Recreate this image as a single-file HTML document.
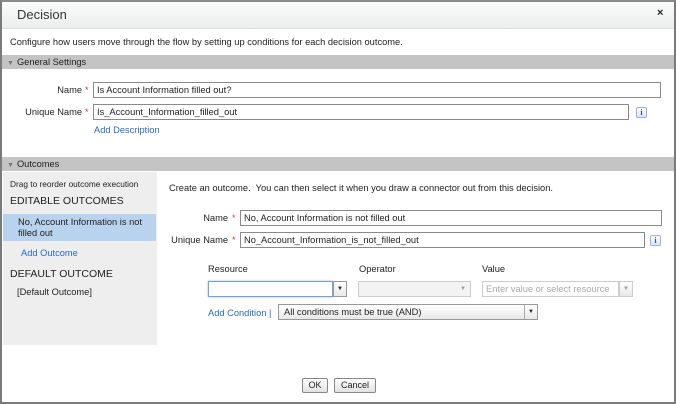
<!DOCTYPE html>
<html><head><style>
*{box-sizing:border-box;margin:0;padding:0}
body{width:676px;height:404px;overflow:hidden;background:#fff;font-family:"Liberation Sans",Arial,sans-serif;font-size:9.3px;color:#222;position:relative}
.a{position:absolute}
.frame{left:0;top:0;width:676px;height:404px;border:2px solid #7a7a7a;border-top-color:#8a8a8a}
.hdr{left:2px;top:2px;width:672px;height:27px;background:linear-gradient(#fafbfb,#eceeee);border-bottom:1px solid #ddd}
.bar{left:2px;width:672px;height:14px;background:#c4c4c4;font-size:9.3px;line-height:14px;padding-left:5px;color:#222}
.bar span{color:#777;font-size:7px;margin-right:3px}
.inp{border:1px solid #8a8a8a;background:#fff;height:16px;line-height:14px;padding-left:3px;font-size:9.3px}
.lbl{text-align:right;font-size:9.3px}
.star{color:#d33;font-size:9px}
.link{color:#2a6bb8}
.info{width:11px;height:11px;border:1px solid #aac;background:linear-gradient(#fff,#dde6f2);border-radius:2px;color:#1f5fb0;font-weight:bold;font-size:8px;text-align:center;line-height:9px;font-family:"Liberation Serif",serif}
.dd{border:1px solid #999;background:linear-gradient(#fff,#e8e8e8);height:16px}
.arr{font-size:6px;text-align:center;line-height:14px}
.btn{border:1px solid #888;border-radius:2px;background:linear-gradient(#fff,#e2e2e2);height:15px;line-height:13px;text-align:center;font-size:9px}
</style></head><body>
<div class="a frame"></div>
<div class="a hdr"></div>
<div class="a" style="left:17px;top:7px;font-size:13px;color:#333">Decision</div>
<div class="a" style="left:657px;top:7px;font-size:11px;font-weight:bold">×</div>
<div class="a" style="left:10px;top:37px">Configure how users move through the flow by setting up conditions for each decision outcome.</div>
<div class="a bar" style="top:55px"><span>▼</span>General Settings</div>
<div class="a lbl" style="left:10px;top:85px;width:72px">Name</div>
<div class="a star" style="left:85px;top:85px">*</div>
<div class="a inp" style="left:93px;top:82px;width:568px">Is Account Information filled out?</div>
<div class="a lbl" style="left:10px;top:107px;width:72px">Unique Name</div>
<div class="a star" style="left:85px;top:107px">*</div>
<div class="a inp" style="left:93px;top:104px;width:536px">Is_Account_Information_filled_out</div>
<div class="a info" style="left:636px;top:107px">i</div>
<div class="a link" style="left:94px;top:125px">Add Description</div>
<div class="a bar" style="top:157px"><span>▼</span>Outcomes</div>
<div class="a" style="left:3px;top:172px;width:154px;height:173px;background:#eeeeef"></div>
<div class="a" style="left:10px;top:179px;font-size:8.3px">Drag to reorder outcome execution</div>
<div class="a" style="left:10px;top:195px;font-size:10.5px">EDITABLE OUTCOMES</div>
<div class="a" style="left:3px;top:214px;width:153px;height:27px;background:#b9d2ee"></div>
<div class="a" style="left:18px;top:217px;line-height:11px">No, Account Information is not<br>filled out</div>
<div class="a link" style="left:21px;top:248px">Add Outcome</div>
<div class="a" style="left:10px;top:268px;font-size:10.5px">DEFAULT OUTCOME</div>
<div class="a" style="left:17px;top:287px">[Default Outcome]</div>
<div class="a" style="left:169px;top:183px">Create an outcome.&nbsp; You can then select it when you draw a connector out from this decision.</div>
<div class="a lbl" style="left:160px;top:213px;width:68px">Name</div>
<div class="a star" style="left:232px;top:213px">*</div>
<div class="a inp" style="left:240px;top:210px;width:422px">No, Account Information is not filled out</div>
<div class="a lbl" style="left:160px;top:235px;width:68px">Unique Name</div>
<div class="a star" style="left:232px;top:235px">*</div>
<div class="a inp" style="left:240px;top:232px;width:405px">No_Account_Information_is_not_filled_out</div>
<div class="a info" style="left:650px;top:235px">i</div>
<div class="a" style="left:208px;top:264px">Resource</div>
<div class="a" style="left:359px;top:264px">Operator</div>
<div class="a" style="left:482px;top:264px">Value</div>
<div class="a inp" style="left:208px;top:281px;width:125px;border-color:#7aa0d0;box-shadow:0 0 2px #9bc"></div>
<div class="a dd arr" style="left:333px;top:281px;width:14px">▼</div>
<div class="a dd" style="left:358px;top:281px;width:113px;border-color:#ccc;background:#f3f3f3"></div>
<div class="a arr" style="left:456px;top:282px;width:14px;color:#999">▼</div>
<div class="a inp" style="left:482px;top:281px;width:137px;border-color:#ccc;color:#aaa">Enter value or select resource</div>
<div class="a dd arr" style="left:619px;top:281px;width:14px;border-color:#ccc;color:#999">▼</div>
<div class="a link" style="left:208px;top:308px">Add Condition |</div>
<div class="a dd" style="left:278px;top:304px;width:260px;padding-left:5px;line-height:14px">All conditions must be true (AND)</div>
<div class="a arr" style="left:524px;top:305px;width:13px;border-left:1px solid #aaa">▼</div>
<div class="a btn" style="left:302px;top:378px;width:26px">OK</div>
<div class="a btn" style="left:334px;top:378px;width:42px">Cancel</div>
</body></html>
